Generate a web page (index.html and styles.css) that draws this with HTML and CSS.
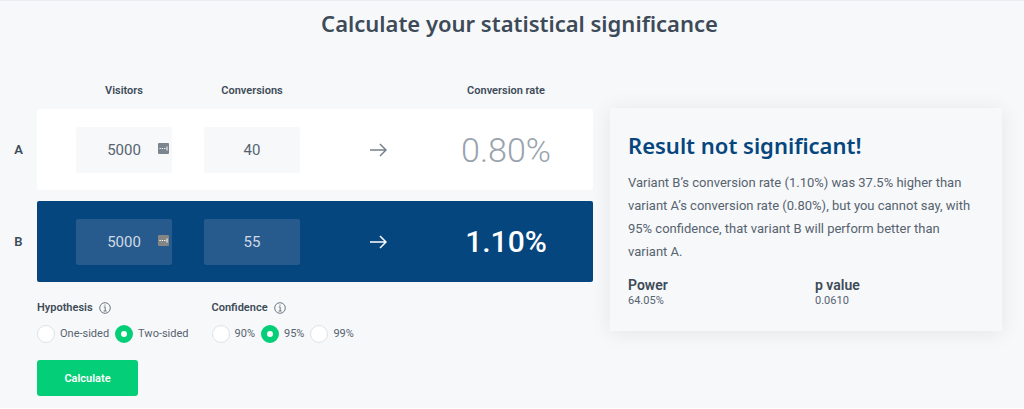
FILE: index.html
```html
<!DOCTYPE html>
<html lang="en">
<head>
    <meta charset="UTF-8">
    <meta name="viewport" content="width=device-width, initial-scale=1.0">
    <title>A/B Test Calculator</title>
    <link rel="stylesheet" href="styles.css">
</head>
<body>
<main class="page">
    <h1>Calculate your statistical significance</h1>

    <div class="columns">
        <form class="calculator">
            <div class="row headings">
                <span></span>
                <div class="cells">
                    <label for="visitorsA">Visitors</label>
                    <label for="conversionsA">Conversions</label>
                    <span></span>
                    <span class="heading">Conversion rate</span>
                </div>
            </div>

            <div class="row">
                <span class="variant">A</span>
                <div class="cells panel">
                    <div class="field">
                        <input type="text" id="visitorsA" name="visitorsA" value="5000">
                        <svg class="autofill" viewBox="0 0 11 11"><rect width="11" height="11" rx="1" fill="#7b858f"/><path d="M1.5 5.5h1.3M3.8 5.5h1.3M6.1 5.5h1.3M9 3.5v4" stroke="#fff"/></svg>
                    </div>
                    <div class="field">
                        <input type="text" id="conversionsA" name="conversionsA" value="40">
                    </div>
                    <svg class="arrow" viewBox="0 0 18 14"><path d="M1 7h16M11 1l6 6-6 6"/></svg>
                    <output class="rate">0.80%</output>
                </div>
            </div>

            <div class="row">
                <span class="variant">B</span>
                <div class="cells panel panel-blue">
                    <div class="field">
                        <input type="text" name="visitorsB" value="5000" aria-label="Visitors B">
                        <svg class="autofill" viewBox="0 0 11 11"><rect width="11" height="11" rx="1" fill="#858585"/><path d="M1.5 5.5h1.3M3.8 5.5h1.3M6.1 5.5h1.3M9 3.5v4" stroke="#fff"/></svg>
                    </div>
                    <div class="field">
                        <input type="text" name="conversionsB" value="55" aria-label="Conversions B">
                    </div>
                    <svg class="arrow" viewBox="0 0 18 14"><path d="M1 7h16M11 1l6 6-6 6"/></svg>
                    <output class="rate">1.10%</output>
                </div>
            </div>

            <div class="options">
                <fieldset>
                    <legend>Hypothesis
                        <svg class="info" viewBox="0 0 12 12"><circle cx="6" cy="6" r="5.3"/><path d="M4.8 5h1.4v4M4.6 9h3M6 2.6v1.2"/></svg>
                    </legend>
                    <div class="choices">
                        <label><input type="radio" name="hypothesis" value="one">One-sided</label>
                        <label><input type="radio" name="hypothesis" value="two" checked>Two-sided</label>
                    </div>
                </fieldset>
                <fieldset>
                    <legend>Confidence
                        <svg class="info" viewBox="0 0 12 12"><circle cx="6" cy="6" r="5.3"/><path d="M4.8 5h1.4v4M4.6 9h3M6 2.6v1.2"/></svg>
                    </legend>
                    <div class="choices">
                        <label><input type="radio" name="confidence" value="90">90%</label>
                        <label><input type="radio" name="confidence" value="95" checked>95%</label>
                        <label><input type="radio" name="confidence" value="99">99%</label>
                    </div>
                </fieldset>
            </div>

            <button type="button">Calculate</button>
        </form>

        <section class="result">
            <h2>Result not significant!</h2>
            <p>Variant B’s conversion rate (1.10%) was 37.5% higher than variant A’s conversion rate (0.80%), but you cannot say, with 95% confidence, that variant B will perform better than variant A.</p>
            <dl>
                <div>
                    <dt>Power</dt>
                    <dd>64.05%</dd>
                </div>
                <div>
                    <dt>p value</dt>
                    <dd>0.0610</dd>
                </div>
            </dl>
        </section>
    </div>
</main>
</body>
</html>
```
FILE: styles.css
```css
* {
    box-sizing: border-box;
}

body {
    margin: 0;
    background: #fff;
    color: #3d4b58;
    font-family: Roboto, sans-serif;
    font-size: 11px;
    line-height: 16px;
}

h1,
h2 {
    font-family: "Noto Sans", sans-serif;
    font-size: 22px;
    line-height: 32px;
    font-weight: 600;
}

.page {
    padding: 6px 22px 12px 0;
    background: #f7f8fa;
    border-top: 1px solid #ebecef;
}

h1 {
    margin: 0 0 44px;
    padding-left: 37px;
    text-align: center;
}

.columns {
    display: grid;
    grid-template-columns: 593fr 392fr;
    gap: 17px;
    align-items: start;
}

/* Calculator rows */
.row {
    display: grid;
    grid-template-columns: 37px 1fr;
    align-items: center;
    margin-bottom: 11px;
}

.headings {
    margin-bottom: 10px;
    font-weight: 600;
    text-align: center;
    white-space: nowrap;
}

.variant {
    font-size: 13px;
    font-weight: 600;
    text-align: center;
}

.cells {
    display: grid;
    grid-template-columns: 96fr 96fr 92fr 100fr;
    gap: 32px;
    align-items: center;
    padding: 0 37px 0 39px;
}

.panel {
    height: 81px;
    background: #fff;
    border-radius: 2px;
}

.panel-blue {
    background: #05467e;
    color: #fff;
}

.field {
    position: relative;
}

.field input {
    display: block;
    width: 100%;
    height: 46px;
    padding: 0;
    border: 0;
    border-radius: 2px;
    background: #f7f8fa;
    color: #56636f;
    font-family: inherit;
    font-size: 15px;
    text-align: center;
}

.panel-blue input {
    background: #285b8d;
    color: #cfdae5;
}

.autofill {
    position: absolute;
    top: 16px;
    right: 3px;
    width: 11px;
    height: 11px;
}

.arrow {
    width: 18px;
    height: 14px;
    justify-self: center;
    fill: none;
    stroke: #75818c;
    stroke-width: 1.5;
}

.panel-blue .arrow {
    stroke: #fff;
}

.rate {
    justify-self: center;
    color: #98a3ae;
    font-size: 34px;
    line-height: 40px;
    font-weight: 300;
}

.panel-blue .rate {
    color: #fff;
    font-size: 30px;
    font-weight: 500;
}

/* Options below the rows */
.options {
    display: flex;
    gap: 23px;
    padding: 7px 0 0 37px;
}

fieldset {
    margin: 0;
    padding: 0;
    border: 0;
}

legend {
    display: flex;
    align-items: center;
    gap: 6px;
    padding: 0;
    font-weight: 600;
}

.info {
    width: 12px;
    height: 12px;
    fill: none;
    stroke: #6c7883;
}

.choices {
    display: flex;
    gap: 6px;
    margin-top: 9px;
}

.choices label {
    display: flex;
    align-items: center;
    gap: 5px;
    color: #56636f;
}

.choices input {
    appearance: none;
    width: 18px;
    height: 18px;
    margin: 0;
    border: 1px solid #dfe2e6;
    border-radius: 50%;
    background: #fff;
}

.choices input:checked {
    border: 6px solid #05ce78;
}

button {
    width: 101px;
    height: 36px;
    margin: 17px 0 0 37px;
    padding: 0;
    border: 0;
    border-radius: 3px;
    background: #05ce78;
    color: #fff;
    font-family: inherit;
    font-size: 11px;
    font-weight: 600;
}

/* Result card */
.result {
    margin-top: 25px;
    padding: 21px 24px 22px 18px;
    background: #f7f8fa;
    box-shadow: 0 2px 20px rgba(0, 0, 0, 0.08);
}

h2 {
    margin: 0 0 10px;
    color: #05467e;
}

p {
    margin: 0 0 14px;
    color: #56636f;
    font-size: 13px;
    line-height: 23px;
}

dl {
    display: grid;
    grid-template-columns: 187fr 163fr;
    margin: 0;
}

dt {
    font-size: 14px;
    font-weight: 600;
}

dd {
    margin: 0;
    color: #56636f;
    font-size: 11px;
}
```
